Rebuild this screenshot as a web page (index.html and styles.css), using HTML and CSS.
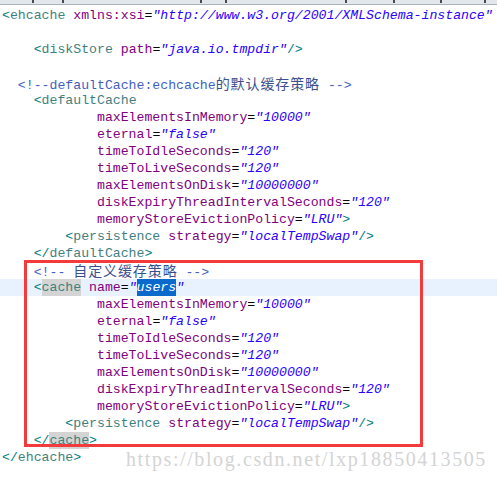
FILE: index.html
```html
<!DOCTYPE html>
<html lang="zh">

<head>
  <meta charset="UTF-8">
  <meta name="viewport" content="width=device-width, initial-scale=1.0">
  <link rel="stylesheet" href="styles.css">
</head>

<body>
  <div class="editor">
    <div class="topbar">
      <span class="tick t1"></span><span class="tick t2"></span><span class="tick t3"></span><span class="tick t4"></span><span class="tick t5"></span><span class="tick t6"></span><span class="tick t7"></span><span class="tick t8"></span>
    </div>

    <div class="code">
      <div class="ln"><span class="br">&lt;</span><span class="tn">ehcache</span> <span class="an">xmlns:xsi</span>=<span class="av">"http://www.w3.org/2001/XMLSchema-instance"</span></div>
      <div class="ln"></div>
      <div class="ln">    <span class="br">&lt;</span><span class="tn">diskStore</span> <span class="an">path</span>=<span class="av">"java.io.tmpdir"</span><span class="br">/&gt;</span></div>
      <div class="ln"></div>
      <div class="ln">  <span class="cm">&lt;!--defaultCache:echcache<span class="cjk">的默认缓存策略</span> --&gt;</span></div>
      <div class="ln">    <span class="br">&lt;</span><span class="tn">defaultCache</span></div>
      <div class="ln">            <span class="an">maxElementsInMemory</span>=<span class="av">"10000"</span></div>
      <div class="ln">            <span class="an">eternal</span>=<span class="av">"false"</span></div>
      <div class="ln">            <span class="an">timeToIdleSeconds</span>=<span class="av">"120"</span></div>
      <div class="ln">            <span class="an">timeToLiveSeconds</span>=<span class="av">"120"</span></div>
      <div class="ln">            <span class="an">maxElementsOnDisk</span>=<span class="av">"10000000"</span></div>
      <div class="ln">            <span class="an">diskExpiryThreadIntervalSeconds</span>=<span class="av">"120"</span></div>
      <div class="ln">            <span class="an">memoryStoreEvictionPolicy</span>=<span class="av">"LRU"</span><span class="br">&gt;</span></div>
      <div class="ln">        <span class="br">&lt;</span><span class="tn">persistence</span> <span class="an">strategy</span>=<span class="av">"localTempSwap"</span><span class="br">/&gt;</span></div>
      <div class="ln">    <span class="br">&lt;/</span><span class="tn">defaultCache</span><span class="br">&gt;</span></div>
      <div class="ln">    <span class="cm">&lt;!-- <span class="cjk">自定义缓存策略</span> --&gt;</span></div>
      <div class="ln current">    <span class="br">&lt;</span><span class="tn match">cache</span> <span class="an">name</span>=<span class="av">"<span class="sel">users</span>"</span></div>
      <div class="ln">            <span class="an">maxElementsInMemory</span>=<span class="av">"10000"</span></div>
      <div class="ln">            <span class="an">eternal</span>=<span class="av">"false"</span></div>
      <div class="ln">            <span class="an">timeToIdleSeconds</span>=<span class="av">"120"</span></div>
      <div class="ln">            <span class="an">timeToLiveSeconds</span>=<span class="av">"120"</span></div>
      <div class="ln">            <span class="an">maxElementsOnDisk</span>=<span class="av">"10000000"</span></div>
      <div class="ln">            <span class="an">diskExpiryThreadIntervalSeconds</span>=<span class="av">"120"</span></div>
      <div class="ln">            <span class="an">memoryStoreEvictionPolicy</span>=<span class="av">"LRU"</span><span class="br">&gt;</span></div>
      <div class="ln">        <span class="br">&lt;</span><span class="tn">persistence</span> <span class="an">strategy</span>=<span class="av">"localTempSwap"</span><span class="br">/&gt;</span></div>
      <div class="ln">    <span class="br">&lt;/</span><span class="tn match">cache</span><span class="br">&gt;</span></div>
      <div class="ln"><span class="br">&lt;/</span><span class="tn">ehcache</span><span class="br">&gt;</span></div>
    </div>

    <!-- annotation box drawn over the custom cache block -->
    <div class="mark"></div>
    <div class="watermark">https://blog.csdn.net/lxp18850413505</div>
  </div>
</body>

</html>
```

FILE: styles.css
```css
body {
  margin: 0;
  background-color: #ffffff;
}

.editor {
  position: relative;
  width: 497px;
  height: 479px;
  overflow: hidden;
  font-family: "Liberation Mono", monospace;
  font-size: 13.2px;
  color: #000000;
}

.editor .topbar {
  display: flex;
  align-items: flex-start;
  height: 4px;
  overflow: hidden;
  background-color: #e2e7ed;
  border-bottom: 1px solid #a9b2bb;
}

.editor .topbar .tick {
  width: 2px;
  height: 3px;
  background-color: #4a4a4a;
}

.editor .topbar .t1 { margin-left: 32px; }
.editor .topbar .t2 { margin-left: 28px; }
.editor .topbar .t3 { margin-left: 136px; }
.editor .topbar .t4 { margin-left: 23px; }
.editor .topbar .t5 { margin-left: 118px; }
.editor .topbar .t6 { margin-left: 46px; }
.editor .topbar .t7 { margin-left: 45px; }
.editor .topbar .t8 { margin-left: 42px; }

.editor .code {
  padding: 2px 0 0 0;
}

.editor .code .ln {
  height: 17px;
  padding-left: 2px;
  line-height: 17px;
  white-space: pre;
}

.editor .code .ln.current {
  background-color: #e8f2fe;
}

.editor .br {
  color: #008080;
}

.editor .tn {
  color: #3f7f7f;
}

.editor .an {
  color: #7f007f;
}

.editor .av {
  color: #2a00ff;
  font-style: italic;
}

.editor .cm {
  color: #3f5fbf;
}

.editor .cjk {
  font-family: "Noto Sans CJK SC", sans-serif;
  font-size: 14px;
  letter-spacing: 0.9px;
  color: #3b4f8f;
}

.editor .match {
  display: inline-block;
  height: 17px;
  background-color: #d4d4d4;
}

.editor .sel {
  display: inline-block;
  height: 17px;
  background-color: #0a6acb;
  color: #ffffff;
}

.editor .mark {
  position: absolute;
  left: 24px;
  top: 260px;
  width: 399px;
  height: 187px;
  box-sizing: border-box;
  border: 3px solid #f43b3b;
}

.editor .watermark {
  position: absolute;
  left: 126px;
  top: 448px;
  font-family: "Liberation Serif", serif;
  font-size: 20px;
  letter-spacing: 1.6px;
  color: #d4d4d4;
  white-space: nowrap;
}
```
